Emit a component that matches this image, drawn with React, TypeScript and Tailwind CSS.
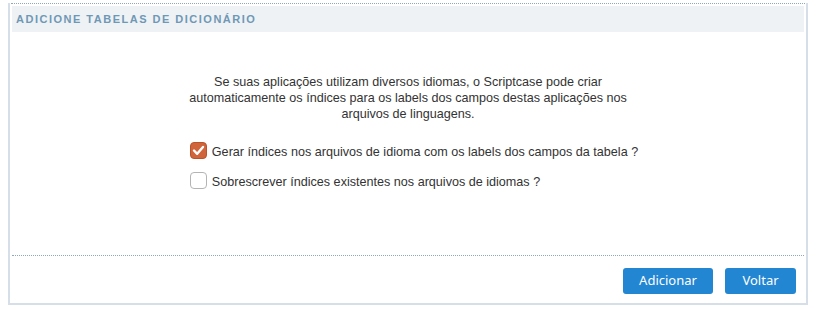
import React, { useState } from 'react';

const Checkbox: React.FC<{ checked: boolean; onChange: () => void }> = ({ checked, onChange }) => (
    <button
        type="button"
        onClick={onChange}
        className={`w-[17px] h-[17px] rounded-[4px] flex items-center justify-center shrink-0 ${
            checked ? 'bg-[#d0643a] border border-[#b9532c]' : 'bg-white border border-[#b4b4b4]'
        }`}
    >
        {checked && (
            <svg width="13" height="13" viewBox="0 0 13 13">
                <path d="M2 6.5 L5.2 9.8 L11 3" fill="none" stroke="white" strokeWidth="2.4" strokeLinecap="round" strokeLinejoin="round" />
            </svg>
        )}
    </button>
);

const App: React.FC = () => {
    const [gerar, setGerar] = useState(true);
    const [sobrescrever, setSobrescrever] = useState(false);

    return (
        <div className="bg-white w-[816px] h-[311px] pt-[3px] pl-[8px]" style={{ fontFamily: '"Liberation Sans", Arial, sans-serif' }}>
            <div className="w-[800px] h-[302px] border-l-2 border-r-2 border-b-2 border-[#d6dfe7] flex flex-col">
                <div className="border-t border-dotted border-[#8fa7bf] ml-[1px] mr-[1px] pt-[2px] px-[1px]">
                    <div className="h-[26px] bg-[#eef2f5] flex items-center pl-[4px]">
                        <span className="text-[11px] font-bold tracking-[1.5px] text-[#6f98b5] uppercase">Adicione tabelas de dicionário</span>
                    </div>
                </div>

                <div className="flex-1 flex flex-col items-center pt-[42px]">
                    <p className="text-[12.6px] leading-[16px] text-[#333] text-center w-[470px]">
                        Se suas aplicações utilizam diversos idiomas, o Scriptcase pode criar automaticamente os índices para os labels dos campos destas aplicações nos arquivos de linguagens.
                    </p>

                    <div className="mt-[18px] flex flex-col gap-[8px] ml-[12px]">
                        <label className="flex items-center gap-[5px] cursor-pointer">
                            <Checkbox checked={gerar} onChange={() => setGerar(!gerar)} />
                            <span className="text-[12.6px] text-[#333] mt-[3px]">Gerar índices nos arquivos de idioma com os labels dos campos da tabela ?</span>
                        </label>
                        <label className="flex items-center gap-[5px] cursor-pointer">
                            <Checkbox checked={sobrescrever} onChange={() => setSobrescrever(!sobrescrever)} />
                            <span className="text-[12.6px] text-[#333] mt-[3px]">Sobrescrever índices existentes nos arquivos de idiomas ?</span>
                        </label>
                    </div>
                </div>

                <div className="mx-[2px] border-t border-dotted border-[#8fa7bf] h-[48px] flex items-start justify-end gap-[12px] pt-[12px] pr-[8px]">
                    <button
                        className="w-[90px] h-[26px] bg-[#2286d3] rounded-[3px] text-white text-[13px]"
                        style={{ fontFamily: '"Noto Sans", "Open Sans", sans-serif' }}
                    >
                        Adicionar
                    </button>
                    <button
                        className="w-[71px] h-[26px] bg-[#2286d3] rounded-[3px] text-white text-[13px]"
                        style={{ fontFamily: '"Noto Sans", "Open Sans", sans-serif' }}
                    >
                        Voltar
                    </button>
                </div>
            </div>
        </div>
    );
};

export default App;
